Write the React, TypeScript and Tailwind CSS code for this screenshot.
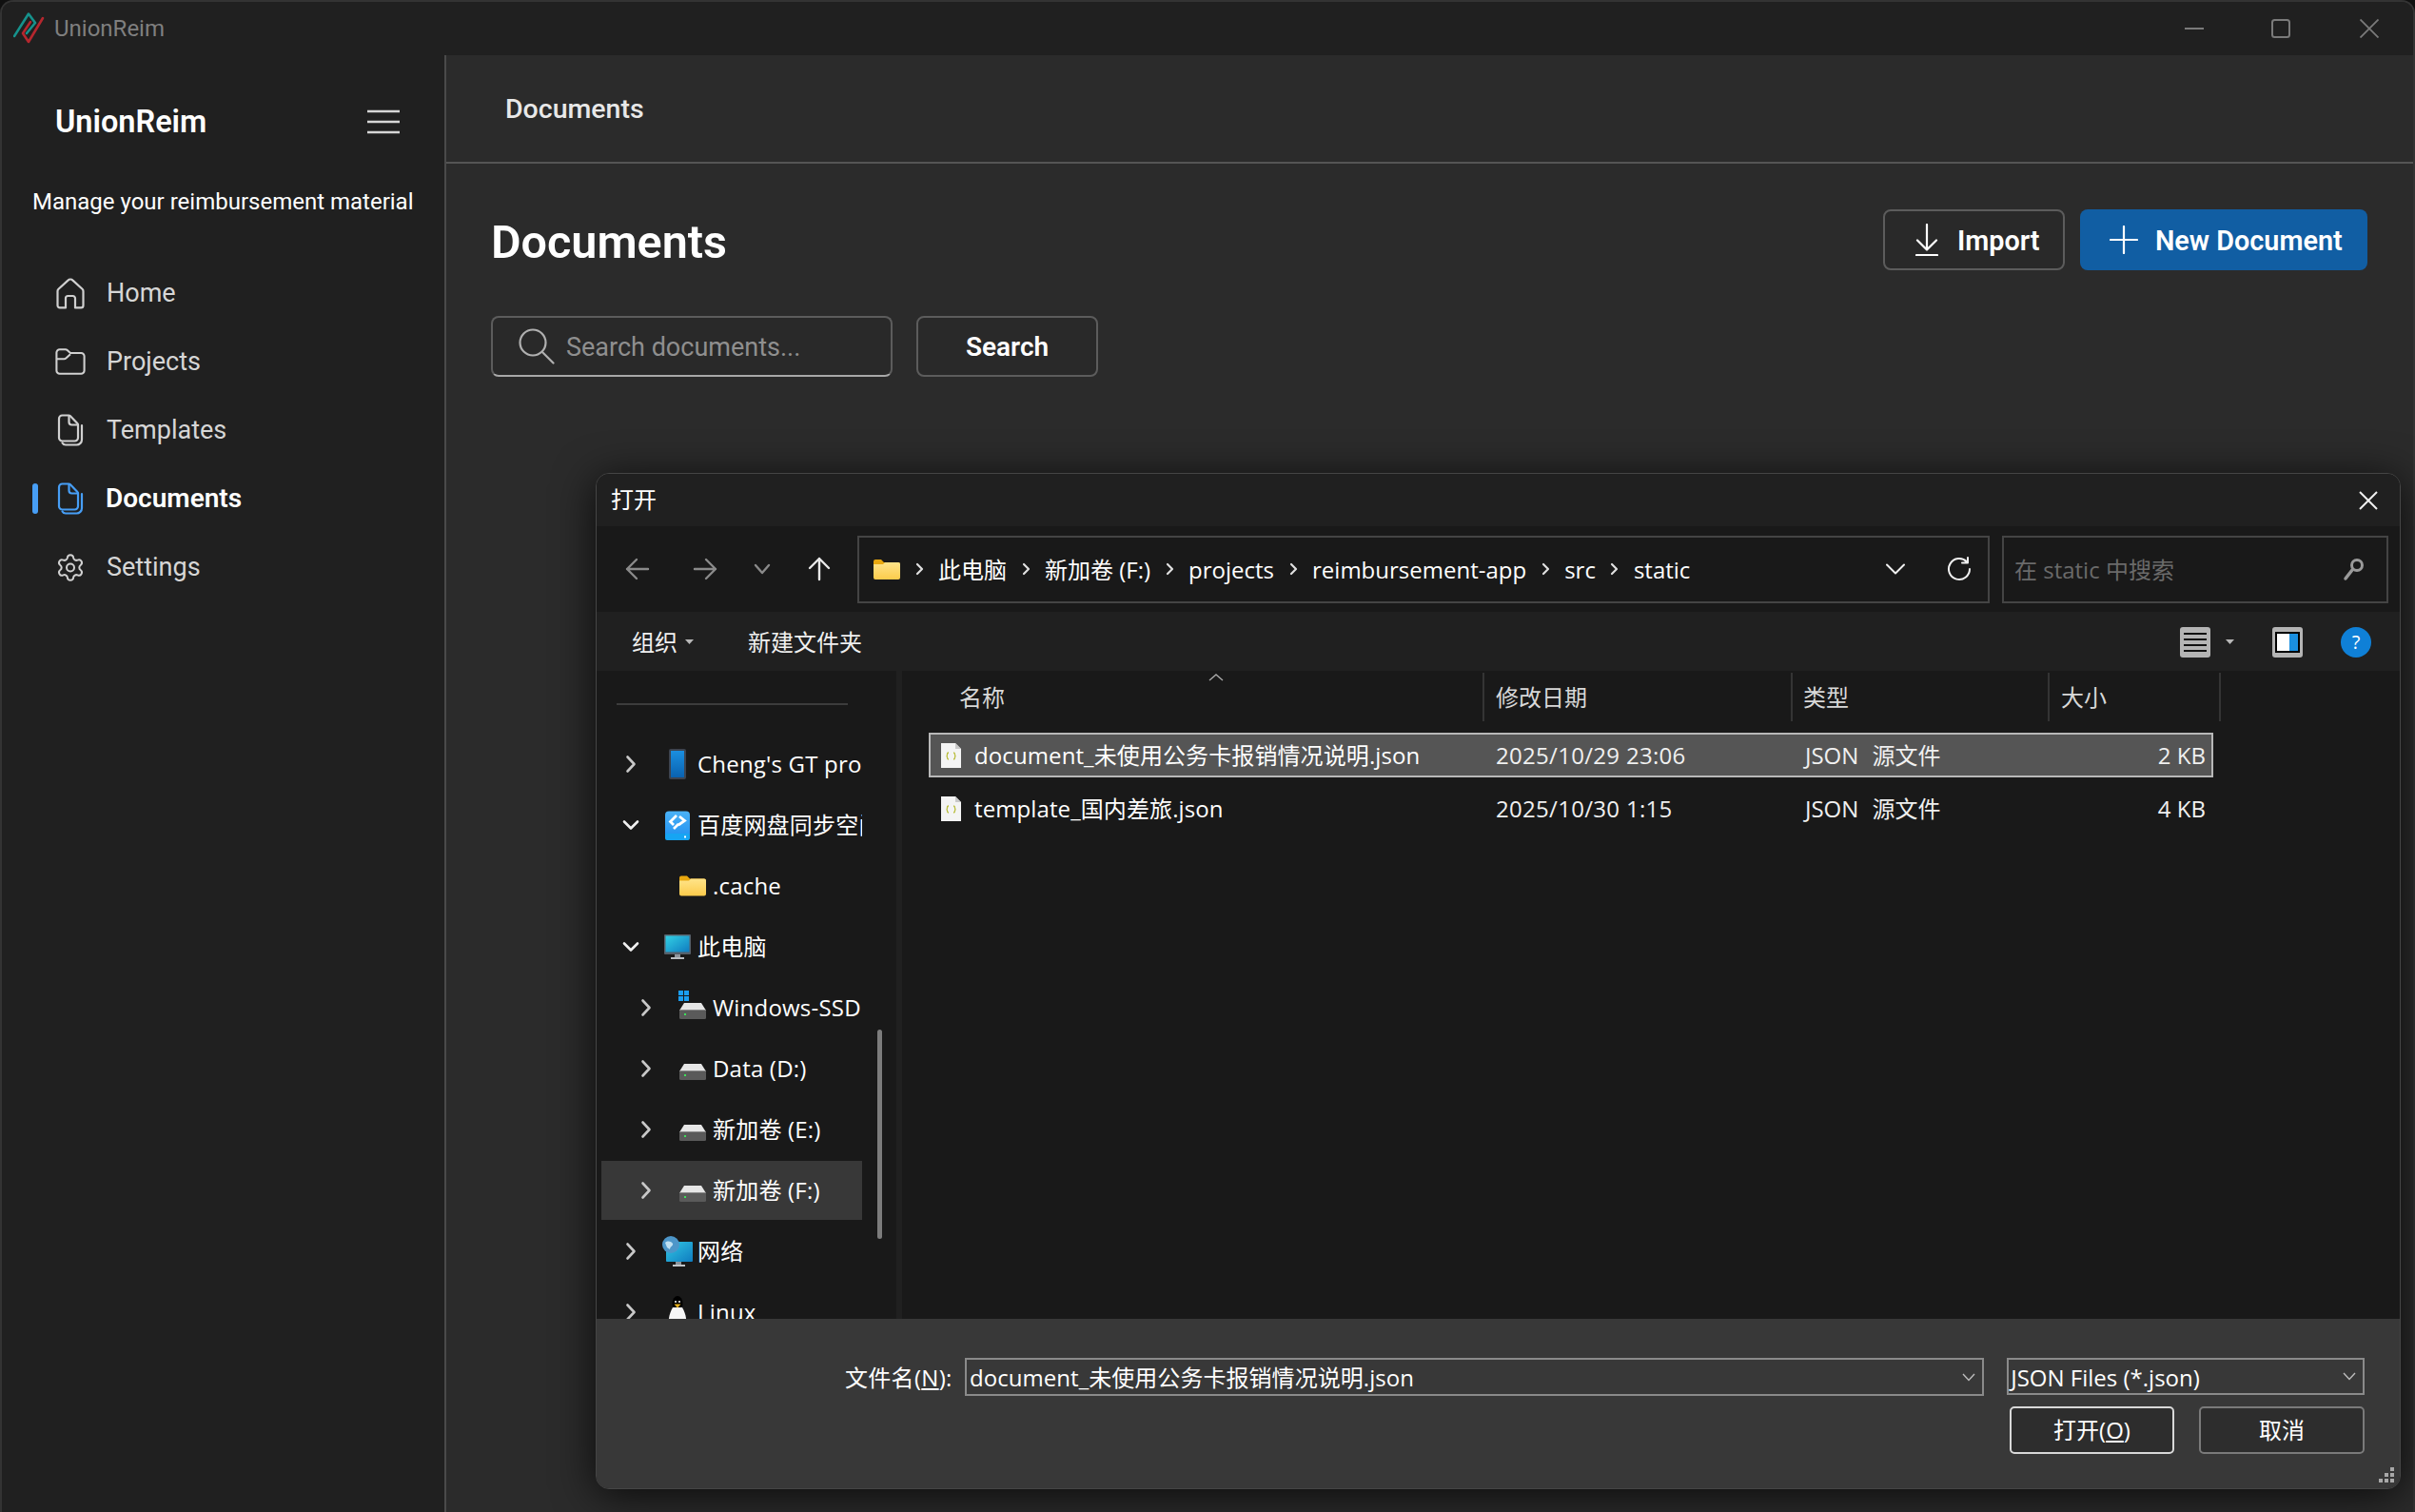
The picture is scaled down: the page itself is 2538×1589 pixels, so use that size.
import React from "react";

const FONT = "font-['Roboto','Noto_Sans_CJK_SC',sans-serif]";
const DIALOG_FONT = "font-['Open_Sans','Noto_Sans_CJK_SC',sans-serif]";

function Logo() {
  return (
    <svg width="34" height="34" viewBox="0 0 34 34" fill="none" strokeWidth="2.6" strokeLinejoin="round" strokeLinecap="round">
      <path d="M1 25 L16 1.500 L23 11 L14 22" stroke="#16928c" />
      <path d="M31 6 L16 31 L10 22 L18 10" stroke="#b5272e" />
    </svg>
  );
}

function Hamburger() {
  return (
    <svg width="34" height="26" viewBox="0 0 34 26" stroke="#d6d6d6" strokeWidth="2.4">
      <path d="M0 2h34M0 13h34M0 24h34" />
    </svg>
  );
}

function HomeIcon() {
  return (
    <svg width="32" height="33" viewBox="0 0 32 33" fill="none" stroke="#d0d0d0" strokeWidth="2.2" strokeLinejoin="round">
      <path d="M13.5 2.6a3.6 3.6 0 0 1 5 0l10 9.2a3 3 0 0 1 1 2.2V29a2.4 2.4 0 0 1-2.4 2.4H21V21.5a2.5 2.5 0 0 0-2.5-2.5h-5a2.5 2.5 0 0 0-2.5 2.5v9.9H4.9A2.4 2.4 0 0 1 2.5 29V14a3 3 0 0 1 1-2.2z" />
    </svg>
  );
}

function FolderIcon() {
  return (
    <svg width="34" height="30" viewBox="0 0 34 30" fill="none" stroke="#d0d0d0" strokeWidth="2.2" strokeLinejoin="round">
      <path d="M1.5 5a3.5 3.5 0 0 1 3.5-3.5h6.5a3 3 0 0 1 2 .8l3.5 3.2h12a3.5 3.5 0 0 1 3.5 3.5v16A3.5 3.5 0 0 1 29 28.5H5A3.5 3.5 0 0 1 1.5 25z" />
      <path d="M1.5 12h8.5a3 3 0 0 0 2-.8L17 6.7" />
    </svg>
  );
}

function DocsIcon({ color }: { color: string }) {
  return (
    <svg width="28" height="34" viewBox="0 0 28 34" fill="none" stroke={color} strokeWidth="2.2" strokeLinejoin="round" strokeLinecap="round">
      <path d="M2 5a3.5 3.5 0 0 1 3.5-3.5h6.8a2 2 0 0 1 1.4.6l7.7 8a2 2 0 0 1 .6 1.4V25a3.5 3.5 0 0 1-3.5 3.5h-13A3.5 3.5 0 0 1 2 25z" />
      <path d="M12.5 2v6.5a3 3 0 0 0 3 3H22" />
      <path d="M26 12v15a5.5 5.5 0 0 1-5.5 5.5H9a4 4 0 0 1-3.5-2" />
    </svg>
  );
}

function GearIcon() {
  return (
    <svg width="34" height="35" viewBox="0 0 24 24" fill="none" stroke="#d0d0d0" strokeWidth="1.5" strokeLinejoin="round" strokeLinecap="round">
      <path d="M9.671 4.136a2.34 2.34 0 0 1 4.659 0 2.34 2.34 0 0 0 3.319 1.915 2.34 2.34 0 0 1 2.33 4.033 2.34 2.34 0 0 0 0 3.831 2.34 2.34 0 0 1-2.33 4.033 2.34 2.34 0 0 0-3.319 1.915 2.34 2.34 0 0 1-4.659 0 2.34 2.34 0 0 0-3.32-1.915 2.34 2.34 0 0 1-2.33-4.033 2.34 2.34 0 0 0 0-3.831A2.34 2.34 0 0 1 6.35 6.051a2.34 2.34 0 0 0 3.319-1.915" />
      <circle cx="12" cy="12" r="3" />
    </svg>
  );
}

function SideItem({ icon, label, active }: { icon: React.ReactNode; label: string; active?: boolean }) {
  return (
    <div className="flex h-[72px] items-center pl-[32px]">
      <div className={`h-[32px] w-[6px] rounded-full ${active ? "bg-[#479ef5]" : ""}`} />
      <div className="ml-[18px] flex w-[32px] items-center justify-center">{icon}</div>
      <span className={active ? "ml-[21px] text-[28px] font-semibold text-white" : "ml-[22px] text-[27px] text-[#d6d6d6]"}>{label}</span>
    </div>
  );
}

function Sidebar() {
  return (
    <aside className="flex h-full w-[467px] shrink-0 flex-col border-r-2 border-[#4a4a4a] bg-[#202020]">
      <div className="mt-[44px] flex h-[52px] items-center justify-between pl-[56px] pr-[47px]">
        <span className="text-[32.5px] font-semibold text-white">UnionReim</span>
        <Hamburger />
      </div>
      <div className="ml-[32px] mt-[42px] text-[24px] leading-[32px] text-white whitespace-nowrap">Manage your reimbursement material</div>
      <nav className="mt-[44px] flex flex-col">
        <SideItem icon={<HomeIcon />} label="Home" />
        <SideItem icon={<FolderIcon />} label="Projects" />
        <SideItem icon={<DocsIcon color="#d0d0d0" />} label="Templates" />
        <SideItem icon={<DocsIcon color="#479ef5" />} label="Documents" active />
        <SideItem icon={<GearIcon />} label="Settings" />
      </nav>
    </aside>
  );
}

function TitleBar() {
  return (
    <div className="flex h-[56px] shrink-0 items-center bg-[#202020] pl-[12px]">
      <Logo />
      <span className="ml-[9px] text-[24px] text-[#7f7f7f]">UnionReim</span>
      <div className="ml-auto flex items-center pr-[36px]">
        <svg width="20" height="2" className="mr-[71px]"><path d="M0 1h20" stroke="#7a7a7a" strokeWidth="2" /></svg>
        <svg width="20" height="20" className="mr-[73px]" fill="none"><rect x="1" y="1" width="18" height="18" rx="2.5" stroke="#7a7a7a" strokeWidth="2" /></svg>
        <svg width="20" height="20" stroke="#7a7a7a" strokeWidth="1.8"><path d="M0.5 0.5l19 19M19.5 0.5l-19 19" /></svg>
      </div>
    </div>
  );
}

function Toolbar() {
  return (
    <div className="flex h-[64px] items-stretch justify-between">
      <h1 className="flex items-center pt-[7px] text-[48.5px] font-semibold leading-none text-white">Documents</h1>
      <div className="flex gap-[16px]">
        <button className="flex w-[191px] items-center rounded-[8px] border-2 border-[#5c5c5c] bg-[#292929] pl-[31px] font-semibold text-white">
          <svg width="26" height="34" fill="none" stroke="#fff" strokeWidth="2.2" strokeLinecap="round" strokeLinejoin="round">
            <path d="M13 1v26M3 17.5l10 10 10-10M2 33h22" />
          </svg>
          <span className="ml-[19px] pt-[4px] text-[28.8px]">Import</span>
        </button>
        <button className="flex w-[302px] items-center rounded-[8px] bg-[#115ea3] pl-[31px] font-semibold text-white">
          <svg width="30" height="30" stroke="#fff" strokeWidth="2.2" strokeLinecap="round"><path d="M15 1v28M1 15h28" /></svg>
          <span className="ml-[18px] pt-[3px] text-[28.8px]">New Document</span>
        </button>
      </div>
    </div>
  );
}

function SearchRow() {
  return (
    <div className="mt-[48px] flex gap-[25px]">
      <div className="flex h-[64px] w-[422px] items-center rounded-[8px] border-2 border-[#5c5c5c] border-b-[#a8a8a8] bg-[#292929] pl-[27px]">
        <svg width="38" height="38" fill="none" stroke="#b0b0b0" strokeWidth="2.2" strokeLinecap="round">
          <circle cx="15" cy="15" r="13.5" /><path d="M25 25l11.5 11.5" />
        </svg>
        <span className="ml-[12px] pt-[2px] text-[27px] text-[#8f8f8f]">Search documents...</span>
      </div>
      <button className="flex h-[64px] w-[191px] items-center justify-center rounded-[8px] border-2 border-[#5c5c5c] bg-[#292929] pt-[2px] text-[28px] font-semibold text-white">Search</button>
    </div>
  );
}

function Chevron({ open }: { open?: boolean }) {
  return (
    <svg width="20" height="20" viewBox="0 0 20 20" fill="none" stroke={open ? "#f0f0f0" : "#c8c8c8"} strokeWidth="2.6" strokeLinecap="round" strokeLinejoin="round">
      {open ? <path d="M3 6.5l7 7 7-7" /> : <path d="M6.5 2.5l7 7.5-7 7.5" />}
    </svg>
  );
}

function PhoneIcon() {
  return (
    <svg width="18" height="32" viewBox="0 0 18 32">
      <defs><linearGradient id="ph" x1="0" y1="0" x2="0" y2="1"><stop offset="0" stopColor="#1a8fe0" /><stop offset="1" stopColor="#0a62b0" /></linearGradient></defs>
      <rect width="18" height="32" rx="2" fill="#3d4450" /><rect x="2" y="2" width="14" height="28" fill="url(#ph)" />
    </svg>
  );
}

function BaiduIcon() {
  return (
    <svg width="26" height="31" viewBox="0 0 26 31">
      <defs><linearGradient id="bd" x1="0" y1="0" x2="0" y2="1"><stop offset="0" stopColor="#4ab2f7" /><stop offset="1" stopColor="#1e8ff0" /></linearGradient></defs>
      <rect width="26" height="30" y="0.5" rx="4" fill="url(#bd)" />
      <path d="M12 5l-6.5 6.5L9 15M14 15l6.5-4.5L15 6M9 19l5-5" stroke="#fff" strokeWidth="2.8" fill="none" />
      <rect y="24" width="26" height="7" rx="2" fill="#16a5f3" /><rect x="20" y="26.5" width="2" height="2" fill="#fff" />
    </svg>
  );
}

function YellowFolder({ w, h }: { w: number; h: number }) {
  return (
    <svg width={w} height={h} viewBox="0 0 28 21">
      <defs><linearGradient id="yf" x1="0" y1="0" x2="0" y2="1"><stop offset="0" stopColor="#ffe48a" /><stop offset="1" stopColor="#fccb4b" /></linearGradient></defs>
      <path d="M0 2a2 2 0 0 1 2-2h6l3 3h15a2 2 0 0 1 2 2v3H0z" fill="#e9a80f" />
      <path d="M0 5h10l2-2h14a2 2 0 0 1 2 2v14a2 2 0 0 1-2 2H2a2 2 0 0 1-2-2z" fill="url(#yf)" />
    </svg>
  );
}

function MonitorIcon() {
  return (
    <svg width="28" height="26" viewBox="0 0 28 26">
      <defs><linearGradient id="mn" x1="0" y1="0" x2="1" y2="1"><stop offset="0" stopColor="#32d0e4" /><stop offset="1" stopColor="#0f7cc0" /></linearGradient></defs>
      <rect width="28" height="21" rx="1" fill="#56606a" /><rect x="1.5" y="1.5" width="25" height="17" fill="url(#mn)" />
      <rect x="11" y="21" width="6" height="3" fill="#8d949b" /><rect x="7" y="24" width="14" height="2" fill="#b8bcc0" />
    </svg>
  );
}

function DriveIcon({ windows }: { windows?: boolean }) {
  return (
    <svg width="28" height="24" viewBox="0 0 28 24" className="overflow-visible">
      <path d="M5 7h18l5 8H0z" fill="#e6e6e6" />
      <rect y="14" width="28" height="10" rx="1.5" fill="#5a5a5a" />
      <rect x="0" y="14" width="28" height="1" fill="#8a8a8a" />
      <rect x="5" y="18" width="2" height="2" fill="#3fe05a" />
      {windows ? (
        <g fill="#1a9df0"><rect x="-1" y="-6" width="5" height="5" /><rect x="5" y="-6" width="5" height="5" /><rect x="-1" y="0" width="5" height="5" /><rect x="5" y="0" width="5" height="5" /></g>
      ) : null}
    </svg>
  );
}

function NetworkIcon() {
  return (
    <svg width="32" height="32" viewBox="0 0 32 32">
      <defs><linearGradient id="nw" x1="0" y1="0" x2="1" y2="1"><stop offset="0" stopColor="#32c8e4" /><stop offset="1" stopColor="#0f7cc0" /></linearGradient></defs>
      <rect x="4" y="6" width="28" height="21" rx="1" fill="url(#nw)" />
      <rect x="14" y="27" width="6" height="3" fill="#8d949b" /><rect x="11" y="30" width="13" height="2" fill="#c0c4c8" />
      <circle cx="9" cy="9" r="9" fill="#4d96c9" /><path d="M3 7c3-3 7-1 8 1s-3 3-3 6l-3-2z" fill="#bfe0f2" />
    </svg>
  );
}

function PenguinIcon() {
  return (
    <svg width="20" height="34" viewBox="0 0 20 34">
      <ellipse cx="10" cy="8" rx="5.500" ry="8" fill="#000" />
      <circle cx="8" cy="6" r="1" fill="#fff" /><circle cx="12" cy="6" r="1" fill="#fff" />
      <path d="M5 12c-3 5-5 12-4 18h18c1-6-1-13-4-18z" fill="#f5f5f5" />
      <path d="M6.500 8.500h7l-3.500 4z" fill="#e8b21d" />
    </svg>
  );
}

function TreeRow({ level, chevron, icon, label, selected }: { level: 1 | 2; chevron?: "open" | "closed"; icon: React.ReactNode; label: string; selected?: boolean }) {
  return (
    <div className={`mb-[2px] flex h-[62px] w-[274px] shrink-0 items-center overflow-hidden ${level === 1 ? "pl-[21px]" : "pl-[37px]"} ${selected ? "bg-[#383838]" : ""}`}>
      <div className="flex w-[20px] shrink-0 items-center justify-center">{chevron ? <Chevron open={chevron === "open"} /> : null}</div>
      <div className="ml-[19px] flex h-[34px] w-[40px] shrink-0 items-center justify-center">{icon}</div>
      <span className="ml-[1px] whitespace-nowrap text-[24px] tracking-[0.2px] text-white">{label}</span>
    </div>
  );
}

function NavPane() {
  return (
    <div className="relative h-full w-[315px] shrink-0 overflow-hidden bg-[#191919] pl-[5px]">
      <div className="ml-[16px] mt-[34px] h-[2px] w-[243px] bg-[#3c3c3c]" />
      <div className="mt-[31px] flex flex-col">
        <TreeRow level={1} chevron="closed" icon={<PhoneIcon />} label="Cheng's GT pro" />
        <TreeRow level={1} chevron="open" icon={<BaiduIcon />} label="百度网盘同步空间" />
        <TreeRow level={2} icon={<YellowFolder w={28} h={22} />} label=".cache" />
        <TreeRow level={1} chevron="open" icon={<MonitorIcon />} label="此电脑" />
        <TreeRow level={2} chevron="closed" icon={<DriveIcon windows />} label="Windows-SSD (C:)" />
        <TreeRow level={2} chevron="closed" icon={<DriveIcon />} label="Data (D:)" />
        <TreeRow level={2} chevron="closed" icon={<DriveIcon />} label="新加卷 (E:)" />
        <TreeRow level={2} chevron="closed" icon={<DriveIcon />} label="新加卷 (F:)" selected />
        <TreeRow level={1} chevron="closed" icon={<NetworkIcon />} label="网络" />
        <TreeRow level={1} chevron="closed" icon={<PenguinIcon />} label="Linux" />
      </div>
      <div className="absolute left-[295px] top-[377px] h-[220px] w-[5px] rounded-full bg-[#7c7c7c]" />
    </div>
  );
}

function FileIcon() {
  return (
    <svg width="21" height="26" viewBox="0 0 21 26">
      <path d="M0 0h15l6 6v20H0z" fill="#f4f4f4" />
      <path d="M15 0v6h6z" fill="#c9c9c9" />
      <path d="M8 10c-1.500 0-1.500 1-1.500 2s0 1.500-1 1.500c1 0 1 .5 1 1.500s0 2 1.500 2M13 10c1.500 0 1.500 1 1.500 2s0 1.500 1 1.500c-1 0-1 .5-1 1.500s0 2-1.500 2" fill="none" stroke="#b9bd3c" strokeWidth="1.300" />
    </svg>
  );
}

function FileRow({ name, date, size, selected }: { name: string; date: string; size: string; selected?: boolean }) {
  return (
    <div className={`mb-[9px] grid h-[47px] w-[1350px] grid-cols-[594px_325px_1fr] items-center border-2 pt-[1px] text-[24px] text-[#f0f0f0] ${selected ? "border-[#b8b8b8] bg-[#555555]" : "border-transparent"}`}>
      <div className="flex items-center pl-[11px]">
        <FileIcon />
        <span className="ml-[14px] whitespace-nowrap tracking-[0.1px] text-white">{name}</span>
      </div>
      <span className="whitespace-nowrap tracking-[0.3px]">{date}</span>
      <div className="flex justify-between pr-[6px]">
        <span className="[word-spacing:8px]">JSON 源文件</span>
        <span>{size}</span>
      </div>
    </div>
  );
}

function ColHead({ w, pl, label }: { w: string; pl: string; label: string }) {
  return <div className={`flex h-[51px] items-center border-r-2 border-[#343434] text-[24px] text-[#d8d8d8] ${w} ${pl}`}>{label}</div>;
}

function FilesPane() {
  return (
    <div className="relative h-full flex-1 bg-[#191919] pl-[28px] pt-[2px]">
      <div className="flex">
        <ColHead w="w-[584px]" pl="pl-[32px]" label="名称" />
        <ColHead w="w-[324px]" pl="pl-[12px]" label="修改日期" />
        <ColHead w="w-[270px]" pl="pl-[11px]" label="类型" />
        <ColHead w="w-[180px]" pl="pl-[12px]" label="大小" />
      </div>
      <svg width="16" height="8" className="absolute left-[322px] top-[3px]" fill="none" stroke="#a8a8a8" strokeWidth="1.400"><path d="M1 7l7-6 7 6" /></svg>
      <div className="mt-[12px] flex flex-col">
        <FileRow name="document_未使用公务卡报销情况说明.json" date="2025/10/29 23:06" size="2 KB" selected />
        <FileRow name="template_国内差旅.json" date="2025/10/30 1:15" size="4 KB" />
      </div>
    </div>
  );
}

function Crumb({ label }: { label: string }) {
  return <span className="whitespace-nowrap pt-[2px] text-[24px] text-white">{label}</span>;
}

function Sep() {
  return (
    <div className="flex w-[40px] shrink-0 justify-center">
      <svg width="9" height="14" fill="none" stroke="#e0e0e0" strokeWidth="2.200" strokeLinecap="round" strokeLinejoin="round"><path d="M2 2l5 5-5 5" /></svg>
    </div>
  );
}

function AddressBand() {
  return (
    <div className="flex h-[90px] shrink-0 items-center bg-[#191919] pl-[13px]">
      <div className="flex w-[60px] justify-center">
        <svg width="26" height="24" fill="none" stroke="#8a8a8a" strokeWidth="2.400" strokeLinecap="round" strokeLinejoin="round"><path d="M24 12H2M12 2L2 12l10 10" /></svg>
      </div>
      <div className="flex w-[82px] justify-center">
        <svg width="26" height="24" fill="none" stroke="#8a8a8a" strokeWidth="2.400" strokeLinecap="round" strokeLinejoin="round"><path d="M2 12h22M14 2l10 10-10 10" /></svg>
      </div>
      <div className="flex w-[38px] justify-center">
        <svg width="18" height="12" fill="none" stroke="#8a8a8a" strokeWidth="2.400" strokeLinecap="round" strokeLinejoin="round"><path d="M2 2l7 8 7-8" /></svg>
      </div>
      <div className="flex w-[81px] justify-center">
        <svg width="24" height="26" fill="none" stroke="#e8e8e8" strokeWidth="2.400" strokeLinecap="round" strokeLinejoin="round"><path d="M12 24V2M2 12L12 2l10 10" /></svg>
      </div>
      <div className="flex h-[71px] w-[1190px] items-center border-2 border-[#444444] pl-[15px]">
        <YellowFolder w={28} h={21} />
        <Sep /><Crumb label="此电脑" />
        <Sep /><Crumb label="新加卷 (F:)" />
        <Sep /><Crumb label="projects" />
        <Sep /><Crumb label="reimbursement-app" />
        <Sep /><Crumb label="src" />
        <Sep /><Crumb label="static" />
        <div className="ml-auto flex items-center pr-[17px]">
          <svg width="20" height="12" fill="none" stroke="#f0f0f0" strokeWidth="2" strokeLinecap="round" strokeLinejoin="round"><path d="M1 1.500l9 9 9-9" /></svg>
          <svg width="26" height="26" viewBox="0 0 26 26" className="ml-[44px]" fill="none" stroke="#f0f0f0" strokeWidth="2" strokeLinecap="round" strokeLinejoin="round"><path d="M21 5.500A11 11 0 1 0 24 13M22 1v5.500h-6" /></svg>
        </div>
      </div>
      <div className="ml-[13px] flex h-[71px] w-[406px] items-center justify-between border-2 border-[#444444] pl-[11px] pr-[22px]">
        <span className="pt-[2px] text-[24px] text-[#6a6a6a]">在 static 中搜索</span>
        <svg width="24" height="26" fill="none" stroke="#9a9a9a" strokeWidth="3" strokeLinecap="round"><circle cx="15" cy="9" r="5.500" /><path d="M10 14L3 23" strokeWidth="3.500" /></svg>
      </div>
    </div>
  );
}

function Caret() {
  return <svg width="9" height="5"><path d="M0 0h9L4.500 5z" fill="#b8b8b8" /></svg>;
}

function ToolRow() {
  return (
    <div className="flex h-[62px] shrink-0 items-center bg-[#202020] pl-[37px] pr-[30px]">
      <span className="pt-[2px] text-[24px] text-[#f0f0f0]">组织</span>
      <span className="ml-[8px]"><Caret /></span>
      <span className="ml-[57px] pt-[2px] text-[24px] text-[#f0f0f0]">新建文件夹</span>
      <div className="ml-auto flex items-center pt-[1px]">
        <svg width="32" height="32"><rect width="32" height="32" rx="3" fill="#b4b4b4" /><path d="M4 7h24M4 13h24M4 19h24M4 25h24" stroke="#111" strokeWidth="2" /></svg>
        <span className="ml-[16px]"><Caret /></span>
        <svg width="32" height="32" className="ml-[40px]"><rect width="32" height="32" rx="3" fill="#b4b4b4" /><rect x="3" y="5" width="26" height="22" fill="#000" /><rect x="5" y="7" width="13" height="18" fill="#fff" /><rect x="18" y="7" width="9" height="18" fill="#1a8fe0" /></svg>
        <div className="ml-[40px] flex h-[32px] w-[32px] items-center justify-center rounded-full bg-[#0f80d7] text-[20px] text-white">?</div>
      </div>
    </div>
  );
}

function ComboArrow() {
  return <svg width="14" height="9" fill="none" stroke="#bdbdbd" strokeWidth="1.400"><path d="M1 1l6 6.500L13 1" /></svg>;
}

function Footer() {
  return (
    <div className="relative flex-1 bg-[#383838] pt-[41px] pr-[37px]">
      <div className="flex items-start pl-[261px]">
        <span className="flex h-[40px] w-[113px] items-center whitespace-pre pt-[2px] text-[24px] tracking-[0.3px] text-white">文件名(<span className="underline">N</span>):</span>
        <div className="ml-[13px] flex h-[40px] w-[1072px] items-center justify-between border-2 border-[#8a8a8a] pl-[3px] pr-[7px] text-[24px] text-white">
          <span className="pt-[2px] tracking-[0.05px]">document_未使用公务卡报销情况说明.json</span>
          <ComboArrow />
        </div>
        <div className="ml-[24px] flex h-[39px] w-[376px] items-center justify-between border-2 border-[#8a8a8a] pl-[2px] pr-[7px] text-[24px] text-white">
          <span className="pt-[2px]">JSON Files (*.json)</span>
          <ComboArrow />
        </div>
      </div>
      <div className="mt-[11px] flex justify-end gap-[26px]">
        <button className="h-[50px] w-[173px] rounded-[5px] border-2 border-[#d8d8d8] bg-[#2d2d2d] text-[24px] text-white">打开(<span className="underline">O</span>)</button>
        <button className="h-[50px] w-[174px] rounded-[5px] border-2 border-[#7a7a7a] bg-[#2d2d2d] text-[24px] text-white">取消</button>
      </div>
      <svg width="16" height="16" className="absolute bottom-[6px] right-[6px]" fill="#a8a8a8">
        <rect x="12" y="0" width="4" height="4" /><rect x="6" y="6" width="4" height="4" /><rect x="12" y="6" width="4" height="4" />
        <rect x="0" y="12" width="4" height="4" /><rect x="6" y="12" width="4" height="4" /><rect x="12" y="12" width="4" height="4" />
      </svg>
    </div>
  );
}

function FileDialog() {
  return (
    <div className={`absolute left-[626px] top-[497px] z-10 flex h-[1068px] w-[1897px] flex-col overflow-hidden rounded-[14px] border border-[#454545] bg-[#202020] shadow-[0_6px_44px_rgba(0,0,0,0.75)] ${DIALOG_FONT}`}>
      <div className="flex h-[55px] shrink-0 items-center justify-between bg-[#202020] pl-[15px] pr-[23px]">
        <span className="pb-[2px] text-[24px] text-white">打开</span>
        <svg width="20" height="20" stroke="#f0f0f0" strokeWidth="2"><path d="M1 1l18 18M19 1L1 19" /></svg>
      </div>
      <AddressBand />
      <ToolRow />
      <div className="flex h-[681px] shrink-0">
        <NavPane />
        <div className="h-full w-[6px] shrink-0 bg-[#202020]" />
        <FilesPane />
      </div>
      <Footer />
    </div>
  );
}

export default function App() {
  return (
    <div className={`relative h-[1589px] w-[2538px] overflow-hidden bg-[#101010] ${FONT}`}>
      <div className="flex h-full w-full flex-col overflow-hidden rounded-t-[14px] border-x-2 border-t-2 border-[#333333] bg-[#202020]">
        <TitleBar />
        <div className="flex min-h-0 flex-1">
          <Sidebar />
          <main className="flex h-full flex-1 flex-col bg-[#2b2b2b]">
            <div className="flex h-[114px] shrink-0 items-center border-b-2 border-[#555555] pl-[62px] pt-[2px] text-[28.5px] font-medium text-[#e8e8e8]">Documents</div>
            <div className="pl-[47px] pr-[48px] pt-[48px]">
              <Toolbar />
              <SearchRow />
            </div>
          </main>
        </div>
      </div>
      <FileDialog />
    </div>
  );
}
